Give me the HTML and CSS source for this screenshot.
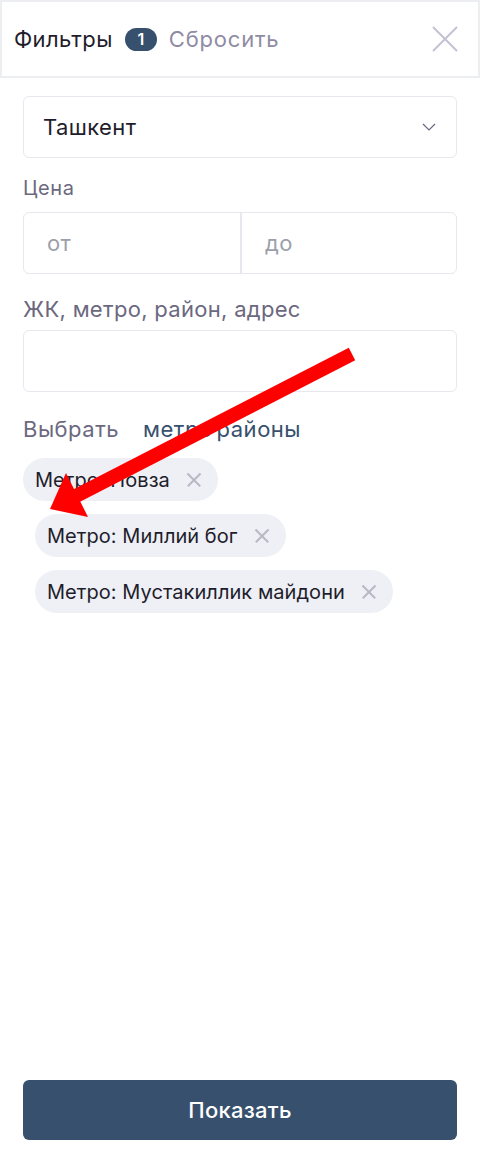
FILE: index.html
```html
<!DOCTYPE html>
<html lang="ru">
<head>
<meta charset="utf-8">
<title>Фильтры</title>
<link rel="stylesheet" href="styles.css">
</head>
<body>
<div class="page">
  <header class="head">
    <span class="head-title">Фильтры</span>
    <span class="badge">1</span>
    <span class="reset">Сбросить</span>
    <span class="close" aria-label="Закрыть">
      <svg width="26" height="26" viewBox="0 0 26 26"><path d="M1 1L25 25M25 1L1 25" stroke="#c4c1d3" stroke-width="2" fill="none"/></svg>
    </span>
  </header>

  <main class="body">
    <div class="select">
      <span>Ташкент</span>
      <svg width="14" height="8" viewBox="0 0 14 8"><path d="M1 1L7 7L13 1" stroke="#6b6880" stroke-width="1.2" fill="none"/></svg>
    </div>

    <div class="label label-price">Цена</div>
    <div class="range">
      <div class="range-cell">от</div>
      <div class="range-cell">до</div>
    </div>

    <div class="label label-search">ЖК, метро, район, адрес</div>
    <div class="input"></div>

    <div class="choose">
      <span class="choose-text">Выбрать</span>
      <span class="choose-link">метро</span>
      <span class="choose-link">районы</span>
    </div>

    <div class="tags">
      <div class="tag"><span>Метро: Новза</span><i class="tag-x"></i></div>
      <div class="tag tag-inset"><span>Метро: Миллий бог</span><i class="tag-x"></i></div>
      <div class="tag tag-inset"><span>Метро: Мустакиллик майдони</span><i class="tag-x"></i></div>
    </div>
  </main>

  <footer class="foot">
    <button class="show">Показать</button>
  </footer>

  <svg class="pointer" width="480" height="1164" viewBox="0 0 480 1164">
    <line x1="352" y1="354" x2="74" y2="497" stroke="#ff0000" stroke-width="14"/>
    <polygon points="50,509 66,473 88,517" fill="#ff0000"/>
  </svg>
</div>
</body>
</html>
```

FILE: styles.css
```css
* { box-sizing: border-box; }

html, body {
  margin: 0;
  padding: 0;
  background: #ffffff;
}

body {
  font-family: Inter, "Noto Sans", "Liberation Sans", sans-serif;
  color: #1f1d2b;
}

.page {
  position: relative;
  width: 480px;
  height: 1164px;
  display: flex;
  flex-direction: column;
}

/* header bar */
.head {
  height: 78px;
  border: 2px solid #eceef2;
  display: flex;
  align-items: center;
  padding: 0 20px 0 12px;
  flex-shrink: 0;
}

.head-title {
  font-size: 22px;
  color: #1f1d2b;
  letter-spacing: 0.4px;
}

.badge {
  margin-left: 12px;
  width: 32px;
  height: 23px;
  border-radius: 12px;
  background: #36506d;
  color: #fff;
  font-size: 16px;
  font-weight: 600;
  display: flex;
  align-items: center;
  justify-content: center;
}

.reset {
  margin-left: 12px;
  font-size: 22px;
  color: #8f8ba3;
  letter-spacing: 0.8px;
}

.close {
  margin-left: auto;
  display: flex;
}

/* filters */
.body {
  flex: 1;
  padding: 18px 23px 0;
  display: flex;
  flex-direction: column;
}

.select {
  height: 62px;
  border: 1.5px solid #e6e8ee;
  border-radius: 6px;
  display: flex;
  align-items: center;
  justify-content: space-between;
  padding: 0 20px 0 19px;
  font-size: 22px;
  letter-spacing: 0.4px;
  color: #1f1d2b;
}

.label {
  font-size: 20px;
  color: #6b6880;
  line-height: 22px;
  letter-spacing: 0.6px;
}

.label-price {
  margin: 19px 0 13px;
}

.label-search {
  font-size: 22px;
  margin: 24px 0 10px;
  letter-spacing: 0.3px;
}

.range {
  height: 62px;
  border: 1.5px solid #e6e8ee;
  border-radius: 6px;
  display: grid;
  grid-template-columns: 1fr 1fr;
}

.range-cell {
  display: flex;
  align-items: center;
  padding-left: 23px;
  font-size: 22px;
  letter-spacing: 0.4px;
  color: #9ba0aa;
}

.range-cell + .range-cell {
  border-left: 2px solid #e6e8ee;
}

.input {
  height: 62px;
  border: 1.5px solid #e6e8ee;
  border-radius: 6px;
}

.choose {
  margin-top: 24px;
  display: flex;
  gap: 4px;
  font-size: 22px;
  letter-spacing: 0.5px;
  line-height: 26px;
}

.choose-text {
  color: #6b6880;
  margin-right: 20px;
}

.choose-link {
  color: #36506d;
}

.tags {
  margin-top: 16px;
  display: flex;
  flex-direction: column;
  align-items: flex-start;
  gap: 13px;
}

.tag {
  height: 43px;
  border-radius: 22px;
  background: #eef0f6;
  display: flex;
  align-items: center;
  padding: 0 17px 0 12px;
  font-size: 20px;
  letter-spacing: 0.05px;
  color: #1f1d2b;
  gap: 17px;
}

.tag-inset {
  margin-left: 12px;
}

.tag-x {
  position: relative;
  width: 14px;
  height: 14px;
}

.tag-x::before,
.tag-x::after {
  content: "";
  position: absolute;
  left: -2px;
  top: 6px;
  width: 18px;
  height: 1.5px;
  background: #b9b8c4;
  transform: rotate(45deg);
}

.tag-x::after {
  transform: rotate(-45deg);
}

/* bottom action */
.foot {
  padding: 0 23px 24px;
  flex-shrink: 0;
}

.show {
  width: 100%;
  height: 60px;
  border: 0;
  border-radius: 6px;
  background: #36506d;
  color: #ffffff;
  font-family: inherit;
  font-size: 22px;
  letter-spacing: 0.25px;
  font-weight: 500;
}

.pointer {
  position: absolute;
  left: 0;
  top: 0;
  pointer-events: none;
}
```
